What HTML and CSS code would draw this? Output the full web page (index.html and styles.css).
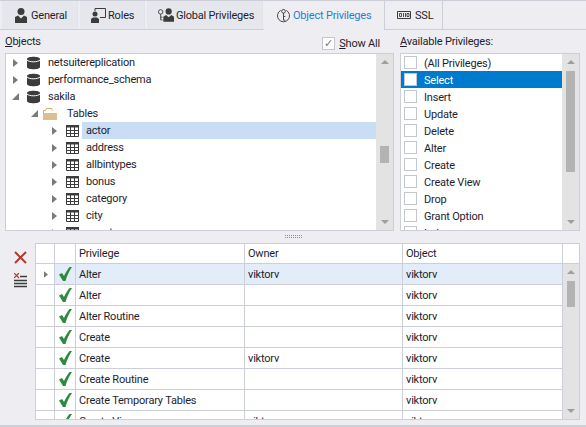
FILE: index.html
```html
<!DOCTYPE html>
<html lang="en">

<head>
    <meta charset="UTF-8">
    <title>Object Privileges</title>
    <link rel="stylesheet" href="styles.css">
</head>

<body>
    <svg class="defs" width="0" height="0">
        <symbol id="i-user" viewBox="0 0 12 15">
            <circle cx="6" cy="3.500" r="3.500" fill="#3c3c3c" />
            <path d="M0 15V9l3-1.500 3 3 3-3 3 1.500v6z" fill="#3c3c3c" />
        </symbol>
        <symbol id="i-db" viewBox="0 0 13 14">
            <path d="M0 3C0 0 13 0 13 3v8c0 3-13 3-13 0z" fill="#3c3c3c" />
            <path d="M0 4c2 2.400 11 2.400 13 0" fill="none" stroke="#fff" stroke-width="1" />
        </symbol>
        <symbol id="i-table" viewBox="0 0 13 12">
            <path d="M.5.500h12v11H.5z" fill="#fff" stroke="#3c3c3c" />
            <path d="M0 0h13v2.500H0z" fill="#3c3c3c" />
            <path d="M4.500 2v10M8.500 2v10M0 5.500h13M0 8.500h13" stroke="#3c3c3c" fill="none" />
        </symbol>
        <symbol id="i-check" viewBox="0 0 13 14">
            <path d="M0 7.500l3-1.500 2 3C6.500 5.500 8.500 2.500 10.500 0H13C10 4 8 9 6.500 14H4z" fill="#2e8b3d" />
        </symbol>
        <symbol id="i-right" viewBox="0 0 5 8">
            <path d="M0 0l5 4-5 4z" fill="#7b7b7b" />
        </symbol>
        <symbol id="i-down" viewBox="0 0 7 7">
            <path d="M7 0v7H0z" fill="#7b7b7b" />
        </symbol>
    </svg>

    <div class="tabs">
        <div class="tab">
            <svg class="tab-icon" width="12" height="15"><use href="#i-user" /></svg>
            General
        </div>
        <div class="tab tab-roles">
            <svg class="tab-icon" width="15" height="15" viewBox="0 0 15 15">
                <path d="M4 3V.5h10.500v9H9" fill="none" stroke="#3c3c3c" />
                <circle cx="4" cy="6" r="2.500" fill="#3c3c3c" />
                <path d="M0 15v-4l2-1.500h4L8 11v4z" fill="#3c3c3c" />
            </svg>
            Roles
        </div>
        <div class="tab tab-global">
            <svg class="tab-icon" width="16" height="14" viewBox="0 0 18 15">
                <circle cx="3" cy="4" r="2.500" fill="none" stroke="#3c3c3c" />
                <path d="M3 6.500V13h2M3 10h2" fill="none" stroke="#3c3c3c" />
                <circle cx="12" cy="3.500" r="3.500" fill="#3c3c3c" />
                <path d="M6 15V9.500l3-2 3 2.500 3-2.500 3 2V15z" fill="#3c3c3c" />
            </svg>
            Global Privileges
        </div>
        <div class="tab tab-active">
            <svg class="tab-icon" width="13" height="15" viewBox="0 0 14 16">
                <path d="M4 2.500A6.500 6.500 0 1 0 10 2.500" fill="none" stroke="#3c3c3c" />
                <circle cx="7" cy="3.500" r="2" fill="none" stroke="#3c3c3c" />
                <path d="M7 5.500V13h2M7 9h2" fill="none" stroke="#3c3c3c" />
            </svg>
            Object Privileges
        </div>
        <div class="tab tab-ssl">
            <svg class="tab-icon" width="14" height="8" viewBox="0 0 14 8">
                <path d="M.5.500h13v7H.5z" fill="none" stroke="#3c3c3c" />
                <path d="M2.500 2.500h2v3h-2zM6.500 2v4M8.500 2v4M10 2.500h2v3h-2z" fill="none" stroke="#3c3c3c" stroke-width=".9" />
            </svg>
            SSL
        </div>
    </div>

    <div class="top-area">
        <div class="objects">
            <div class="objects-head">
                <span class="caption"><u>O</u>bjects</span>
                <label class="show-all"><span class="show-box">&#10003;</span><span><u>S</u>how All</span></label>
            </div>
            <div class="panel">
                <div class="panel-body">
                    <div class="tree-row"><svg class="arrow" width="5" height="8"><use href="#i-right" /></svg><svg class="db" width="13" height="14"><use href="#i-db" /></svg><span class="node">netsuitereplication</span></div>
                    <div class="tree-row"><svg class="arrow" width="5" height="8"><use href="#i-right" /></svg><svg class="db" width="13" height="14"><use href="#i-db" /></svg><span class="node">performance_schema</span></div>
                    <div class="tree-row"><svg class="arrow-open" width="7" height="7"><use href="#i-down" /></svg><svg class="db" width="13" height="14"><use href="#i-db" /></svg><span class="node">sakila</span></div>
                    <div class="tree-row level-1"><svg class="arrow-open" width="7" height="7"><use href="#i-down" /></svg>
                        <svg class="folder" width="14" height="12" viewBox="0 0 14 12">
                            <path d="M.5 11.500V2.500h2l1-2h5l1 2" fill="#fff" stroke="#c9ab7a" />
                            <path d="M0 5h14v7H0z" fill="#dcbf90" />
                        </svg><span class="node">Tables</span>
                    </div>
                    <div class="tree-row level-2"><svg class="arrow" width="5" height="8"><use href="#i-right" /></svg><svg class="grid-icon" width="13" height="12"><use href="#i-table" /></svg><span class="node node-selected">actor</span></div>
                    <div class="tree-row level-2"><svg class="arrow" width="5" height="8"><use href="#i-right" /></svg><svg class="grid-icon" width="13" height="12"><use href="#i-table" /></svg><span class="node">address</span></div>
                    <div class="tree-row level-2"><svg class="arrow" width="5" height="8"><use href="#i-right" /></svg><svg class="grid-icon" width="13" height="12"><use href="#i-table" /></svg><span class="node">allbintypes</span></div>
                    <div class="tree-row level-2"><svg class="arrow" width="5" height="8"><use href="#i-right" /></svg><svg class="grid-icon" width="13" height="12"><use href="#i-table" /></svg><span class="node">bonus</span></div>
                    <div class="tree-row level-2"><svg class="arrow" width="5" height="8"><use href="#i-right" /></svg><svg class="grid-icon" width="13" height="12"><use href="#i-table" /></svg><span class="node">category</span></div>
                    <div class="tree-row level-2"><svg class="arrow" width="5" height="8"><use href="#i-right" /></svg><svg class="grid-icon" width="13" height="12"><use href="#i-table" /></svg><span class="node">city</span></div>
                    <div class="tree-row level-2"><svg class="arrow" width="5" height="8"><use href="#i-right" /></svg><svg class="grid-icon" width="13" height="12"><use href="#i-table" /></svg><span class="node">country</span></div>
                </div>
                <div class="scrollbar">
                    <span class="scroll-up"></span>
                    <div class="scroll-track tree-track"><div class="thumb"></div></div>
                    <span class="scroll-down"></span>
                </div>
            </div>
        </div>

        <div class="privileges">
            <div class="privileges-head"><span class="caption"><u>A</u>vailable Privileges:</span></div>
            <div class="panel">
                <div class="panel-body">
                    <div class="check-row"><span class="box"></span>(All Privileges)</div>
                    <div class="check-row check-row-selected"><span class="box"></span>Select</div>
                    <div class="check-row"><span class="box"></span>Insert</div>
                    <div class="check-row"><span class="box"></span>Update</div>
                    <div class="check-row"><span class="box"></span>Delete</div>
                    <div class="check-row"><span class="box"></span>Alter</div>
                    <div class="check-row"><span class="box"></span>Create</div>
                    <div class="check-row"><span class="box"></span>Create View</div>
                    <div class="check-row"><span class="box"></span>Drop</div>
                    <div class="check-row"><span class="box"></span>Grant Option</div>
                    <div class="check-row"><span class="box"></span>Index</div>
                </div>
                <div class="scrollbar">
                    <span class="scroll-up"></span>
                    <div class="scroll-track list-track"><div class="thumb"></div></div>
                    <span class="scroll-down"></span>
                </div>
            </div>
        </div>
    </div>

    <div class="splitter"><span class="grip"></span></div>

    <div class="bottom-area">
        <div class="toolbar">
            <svg width="13" height="13" viewBox="0 0 13 13">
                <path d="M1 1l11 11M12 1L1 12" stroke="#b03a2e" stroke-width="2" fill="none" />
            </svg>
            <svg width="13" height="15" viewBox="0 0 13 15">
                <path d="M6 3.500h7M0 7.500h13M0 10.500h13M0 13.500h13" stroke="#3c3c3c" stroke-width="1.500" fill="none" />
                <path d="M0 0l5 5M5 0L0 5" stroke="#b03a2e" stroke-width="1.200" fill="none" />
            </svg>
        </div>
        <div class="grid">
            <div class="grid-body">
                <div class="grid-row grid-head">
                    <div class="cell cell-mark"></div>
                    <div class="cell cell-check"></div>
                    <div class="cell cell-priv">Privilege</div>
                    <div class="cell cell-owner">Owner</div>
                    <div class="cell cell-obj">Object</div>
                </div>
                <div class="grid-row grid-row-current">
                    <div class="cell cell-mark"><svg width="4" height="7"><use href="#i-right" /></svg></div>
                    <div class="cell cell-check"><svg width="13" height="14"><use href="#i-check" /></svg></div>
                    <div class="cell cell-priv">Alter</div>
                    <div class="cell cell-owner">viktorv</div>
                    <div class="cell cell-obj">viktorv</div>
                </div>
                <div class="grid-row">
                    <div class="cell cell-mark"></div>
                    <div class="cell cell-check"><svg width="13" height="14"><use href="#i-check" /></svg></div>
                    <div class="cell cell-priv">Alter</div>
                    <div class="cell cell-owner"></div>
                    <div class="cell cell-obj">viktorv</div>
                </div>
                <div class="grid-row">
                    <div class="cell cell-mark"></div>
                    <div class="cell cell-check"><svg width="13" height="14"><use href="#i-check" /></svg></div>
                    <div class="cell cell-priv">Alter Routine</div>
                    <div class="cell cell-owner"></div>
                    <div class="cell cell-obj">viktorv</div>
                </div>
                <div class="grid-row">
                    <div class="cell cell-mark"></div>
                    <div class="cell cell-check"><svg width="13" height="14"><use href="#i-check" /></svg></div>
                    <div class="cell cell-priv">Create</div>
                    <div class="cell cell-owner"></div>
                    <div class="cell cell-obj">viktorv</div>
                </div>
                <div class="grid-row">
                    <div class="cell cell-mark"></div>
                    <div class="cell cell-check"><svg width="13" height="14"><use href="#i-check" /></svg></div>
                    <div class="cell cell-priv">Create</div>
                    <div class="cell cell-owner">viktorv</div>
                    <div class="cell cell-obj">viktorv</div>
                </div>
                <div class="grid-row">
                    <div class="cell cell-mark"></div>
                    <div class="cell cell-check"><svg width="13" height="14"><use href="#i-check" /></svg></div>
                    <div class="cell cell-priv">Create Routine</div>
                    <div class="cell cell-owner"></div>
                    <div class="cell cell-obj">viktorv</div>
                </div>
                <div class="grid-row">
                    <div class="cell cell-mark"></div>
                    <div class="cell cell-check"><svg width="13" height="14"><use href="#i-check" /></svg></div>
                    <div class="cell cell-priv">Create Temporary Tables</div>
                    <div class="cell cell-owner"></div>
                    <div class="cell cell-obj">viktorv</div>
                </div>
                <div class="grid-row">
                    <div class="cell cell-mark"></div>
                    <div class="cell cell-check"><svg width="13" height="14"><use href="#i-check" /></svg></div>
                    <div class="cell cell-priv">Create View</div>
                    <div class="cell cell-owner">viktorv</div>
                    <div class="cell cell-obj">viktorv</div>
                </div>
            </div>
            <div class="grid-side">
                <div class="grid-corner"></div>
                <div class="scrollbar">
                    <span class="scroll-up"></span>
                    <div class="scroll-track grid-track"><div class="thumb"></div></div>
                    <span class="scroll-down"></span>
                </div>
            </div>
        </div>
    </div>

    <div class="bottom-line"></div>
</body>

</html>
```

FILE: styles.css
```css
* {
    box-sizing: border-box;
}

html,
body {
    height: 100%;
}

body {
    margin: 0;
    overflow: hidden;
    display: flex;
    flex-direction: column;
    background-color: #eeeef2;
    border-top: 1px solid #ccced8;
    font-family: 'Roboto', sans-serif;
    font-size: 11px;
    letter-spacing: -0.2px;
    color: #1e1e2e;
    white-space: nowrap;
}

.defs {
    position: absolute;
}

/* tabs */
.tabs {
    display: flex;
    flex: none;
    height: 29px;
    padding-left: 2px;
    border-bottom: 1px solid #ccced8;
}

.tab {
    display: flex;
    flex: none;
    align-items: center;
    gap: 4px;
    width: 76px;
    margin-right: 2px;
    padding-left: 13px;
    border-right: 1px solid #e2e2e8;
    background-color: #e6e7ed;
}

.tab-roles {
    width: 65px;
    padding-left: 11px;
    gap: 2px;
}

.tab-global {
    width: 116px;
    margin-right: 1px;
    padding-left: 11px;
    gap: 2px;
}

.tab-active {
    width: 121px;
    height: 29px;
    margin-right: 0;
    padding-left: 13px;
    gap: 3px;
    background-color: #eeeef2;
    border-right: 1px solid #ccced8;
    color: #1f7fd0;
}

.tab-ssl {
    width: 58px;
    padding-left: 12px;
    background-color: #eeeef2;
    border-right: 1px solid #ccced8;
}

/* objects tree and privileges list */
.top-area {
    display: flex;
    flex: none;
    height: 201px;
    padding-left: 5px;
}

.objects {
    display: flex;
    flex-direction: column;
    width: 389px;
    margin-right: 6px;
}

.privileges {
    display: flex;
    flex-direction: column;
    width: 180px;
}

.objects-head,
.privileges-head {
    display: flex;
    flex: none;
    align-items: center;
    justify-content: space-between;
    height: 23px;
}

.show-all {
    display: flex;
    align-items: center;
    gap: 4px;
    margin-right: 14px;
    margin-top: 3px;
}

.show-box {
    width: 13px;
    height: 13px;
    border: 1px solid #c4c6d2;
    background-color: #fff;
    color: #777;
    font-size: 11px;
    line-height: 11px;
    text-align: center;
}

.panel {
    display: flex;
    flex: none;
    height: 178px;
    border: 1px solid #ccced8;
    background-color: #fff;
    overflow: hidden;
}

.panel-body {
    flex: 1;
    min-width: 0;
    overflow: hidden;
}

.tree-row {
    display: flex;
    align-items: center;
    height: 17px;
    padding-left: 7px;
}

.tree-row .arrow-open {
    margin-left: -1px;
    margin-right: -1px;
}

.level-1 {
    padding-left: 26px;
}

.level-2 {
    padding-left: 46px;
}

.db {
    margin-left: 9px;
    margin-right: 6px;
    flex: none;
}

.folder {
    margin-left: 6px;
    margin-right: 6px;
    flex: none;
}

.grid-icon {
    margin-left: 9px;
    margin-right: 3px;
    flex: none;
}

.node {
    flex: 1;
    height: 17px;
    line-height: 18px;
    padding-left: 4px;
}

.tree-row .db + .node {
    padding-left: 2px;
}

.node-selected {
    background-color: #c9def4;
}

.check-row {
    display: flex;
    align-items: center;
    gap: 7px;
    height: 17px;
    padding-left: 3px;
    padding-top: 1px;
}

.check-row-selected {
    background-color: #007acc;
    color: #fff;
}

.box {
    width: 13px;
    height: 13px;
    flex: none;
    margin-top: -1px;
    border: 1px solid #c4c6d2;
    background-color: #fff;
}

/* scrollbars */
.scrollbar {
    display: flex;
    flex: none;
    flex-direction: column;
    width: 17px;
    background-color: #e3e3e3;
}

.scroll-up,
.scroll-down {
    flex: none;
    width: 0;
    height: 0;
    align-self: center;
    border-left: 4px solid transparent;
    border-right: 4px solid transparent;
}

.scroll-up {
    margin-top: 6px;
    border-bottom: 4px solid #9e9e9e;
}

.scroll-down {
    margin-bottom: 6px;
    border-top: 4px solid #9e9e9e;
}

.scroll-track {
    flex: 1;
    padding: 0 4px;
}

.thumb {
    background-color: #b3b3b3;
}

.tree-track {
    padding-top: 82px;
}

.tree-track .thumb {
    height: 17px;
}

.list-track {
    padding-top: 7px;
}

.list-track .thumb {
    height: 101px;
}

.grid-track {
    padding-top: 7px;
}

.grid-track .thumb {
    height: 26px;
}

/* splitter */
.splitter {
    display: flex;
    flex: none;
    justify-content: center;
    align-items: center;
    height: 12px;
}

.grip {
    width: 17px;
    height: 4px;
    background-image: radial-gradient(circle at 0.5px 0.5px, #8e8e98 0.5px, transparent 0.7px);
    background-size: 2px 2px;
}

/* grid */
.bottom-area {
    display: flex;
    flex: none;
    height: 177px;
}

.toolbar {
    display: flex;
    flex: none;
    flex-direction: column;
    align-items: center;
    gap: 9px;
    width: 35px;
    padding-top: 8px;
    padding-left: 6px;
}

.grid {
    display: flex;
    flex: none;
    width: 545px;
    height: 177px;
    border: 1px solid #ccced8;
    background-color: #fff;
    overflow: hidden;
}

.grid-body {
    flex: 1;
    min-width: 0;
    overflow: hidden;
}

.grid-row {
    display: flex;
    height: 21px;
    border-bottom: 1px solid #ccced8;
}

.grid-head {
    height: 20px;
}

.grid-row-current .cell {
    background-color: #e3edf9;
}

.cell {
    display: flex;
    flex: none;
    align-items: center;
    padding-left: 3px;
    border-right: 1px solid #ccced8;
}

.grid-row .cell-obj {
    border-right: none;
}

.grid-row-current .cell-mark {
    background-color: #fff;
}

.cell-mark {
    width: 19px;
    padding-left: 8px;
}

.cell-check {
    width: 21px;
    padding-left: 4px;
}

.cell-priv {
    width: 169px;
}

.cell-owner {
    width: 158px;
}

.cell-obj {
    width: 160px;
}

.grid-side {
    display: flex;
    flex: none;
    flex-direction: column;
    width: 17px;
    border-left: 1px solid #ccced8;
}

.grid-corner {
    flex: none;
    height: 20px;
    border-bottom: 1px solid #ccced8;
}

.grid-side .scrollbar {
    flex: 1;
    width: 16px;
}

.bottom-line {
    flex: none;
    height: 2px;
    margin-top: 5px;
    background-color: #ccced8;
}
```
